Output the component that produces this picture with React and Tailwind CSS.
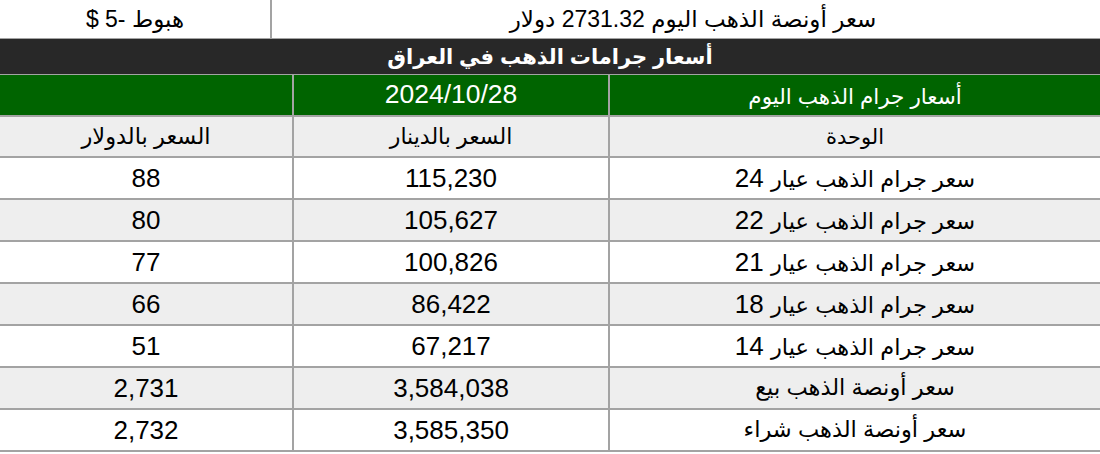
import React from 'react';

const rows = [
  { unit: 'سعر جرام الذهب عيار', num: '24', iqd: '115,230', usd: '88' },
  { unit: 'سعر جرام الذهب عيار', num: '22', iqd: '105,627', usd: '80' },
  { unit: 'سعر جرام الذهب عيار', num: '21', iqd: '100,826', usd: '77' },
  { unit: 'سعر جرام الذهب عيار', num: '18', iqd: '86,422', usd: '66' },
  { unit: 'سعر جرام الذهب عيار', num: '14', iqd: '67,217', usd: '51' },
  { unit: 'سعر أونصة الذهب بيع', iqd: '3,584,038', usd: '2,731' },
  { unit: 'سعر أونصة الذهب شراء', iqd: '3,585,350', usd: '2,732' },
];

const Row = ({ cells, className }) => (
  <div className={'grid grid-cols-[492px_316px_292px] border-b-2 border-[#a3a3a3] ' + className}>
    {cells.map((c, i) => (
      <div
        key={i}
        className={
          'flex items-center justify-center whitespace-nowrap ' +
          (i < 2 ? 'border-l-2 border-[#a3a3a3]' : '')
        }
      >
        {c}
      </div>
    ))}
  </div>
);

export default function App() {
  return (
    <div dir="rtl" className="w-[1100px] bg-white text-black font-['Liberation_Sans','DejaVu_Sans',sans-serif]">
      <div className="flex h-[39px] border-b border-[#a3a3a3]">
        <div className="flex-1 flex items-center justify-center text-[23px] pl-[14px]">
          سعر أونصة الذهب اليوم 2731.32 دولار
        </div>
        <div className="w-[272px] border-r-2 border-[#a3a3a3] flex items-center justify-center text-[23px]">
          هبوط -5 $
        </div>
      </div>

      <div className="h-[36px] bg-[#282828] text-white font-bold text-[21px] flex items-center justify-center border-b border-[#a3a3a3]">
        أسعار جرامات الذهب في العراق
      </div>

      <Row
        cells={[
          <span className="text-[21.5px]">أسعار جرام الذهب اليوم</span>,
          <span className="text-[26.5px] pb-[4px]">2024/10/28</span>,
          '',
        ]}
        className="h-[42px] bg-[#006400] text-white"
      />
      <Row
        cells={[
          <span className="text-[21px]">الوحدة</span>,
          <span className="text-[22px]">السعر بالدينار</span>,
          <span className="text-[22.5px]">السعر بالدولار</span>,
        ]}
        className="h-[41px] bg-[#eeeeee]"
      />
      {rows.map((r, i) => (
        <Row
          key={i}
          cells={[
            <span className="text-[22.5px]">
              {r.unit}
              {r.num && <span className="text-[26px]"> {r.num}</span>}
            </span>,
            <span className="text-[26px]">{r.iqd}</span>,
            <span className="text-[26px]">{r.usd}</span>,
          ]}
          className={'h-[42px] ' + (i % 2 === 1 ? 'bg-[#eeeeee]' : 'bg-white')}
        />
      ))}
    </div>
  );
}
